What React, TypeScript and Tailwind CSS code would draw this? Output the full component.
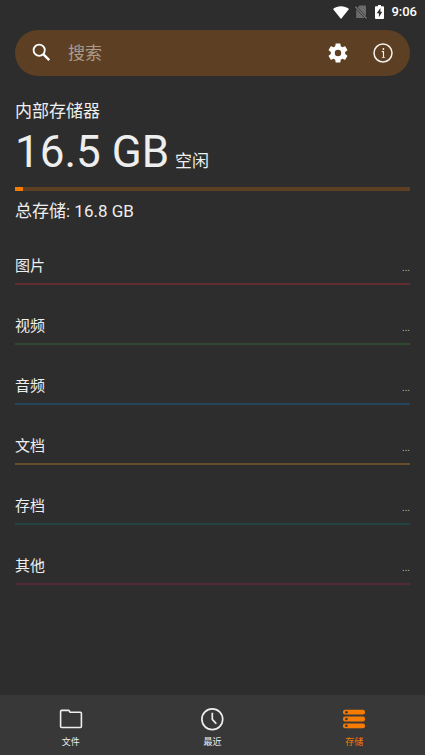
const categories = [
  { name: "图片", line: "border-[#602c2e]" },
  { name: "视频", line: "border-[#30482f]" },
  { name: "音频", line: "border-[#23465c]" },
  { name: "文档", line: "border-[#665029]" },
  { name: "存档", line: "border-[#22433f]" },
  { name: "其他", line: "border-[#532936]" },
];

function StatusBar() {
  return (
    <div className="flex h-6 items-center justify-end pr-2">
      <svg className="h-[13px] w-4" viewBox="0 0 16 13" fill="#fff" aria-hidden="true">
        <path d="M0 3C4.6-.8 11.4-.8 16 3L8 13z" />
      </svg>
      <svg className="ml-1.5 h-3.5 w-3" viewBox="0 0 12 14" aria-hidden="true">
        <path d="M4.5.5H10q1 0 1 1v11.6H1.2V3.8z" fill="#6b6b6b" />
        <path d="M0 1.2 11.7 13.6" stroke="#2d2d2d" strokeWidth="2.4" />
        <path d="M.3 1.6 11.5 13.4" stroke="#858585" strokeWidth="1.1" />
      </svg>
      <svg className="ml-2 h-3.5 w-[9px]" viewBox="0 0 9 14" aria-hidden="true">
        <path d="M3 0h3v1.3h2.2q.8 0 .8.8v11q0 .9-.8.9H.8q-.8 0-.8-.9v-11q0-.8.8-.8H3z" fill="#fff" />
        <path d="M5.4 3 1.8 8.3h2.1v3.9L7.2 6.8H5.4z" fill="#2d2d2d" />
      </svg>
      <span className="ml-[7px] text-[13px] leading-6 font-medium text-white">9:06</span>
    </div>
  );
}

function SearchBar() {
  return (
    <div className="mt-1.5 flex h-[46px] items-center rounded-full bg-[#5d4023] px-[17px]">
      <svg className="h-5 w-5 shrink-0" viewBox="0 0 20 20" fill="none" stroke="#fff" strokeWidth="1.8" aria-hidden="true">
        <circle cx="7.2" cy="7.2" r="5.6" />
        <path d="m11.2 11.2 6 6" strokeWidth="2.4" />
      </svg>
      <input
        type="text"
        aria-label="搜索"
        placeholder="搜索"
        className="ml-4 min-w-0 flex-1 bg-transparent pt-0.5 text-[17px] text-white outline-none placeholder:text-[#ab9b8b]"
      />
      <button type="button" aria-label="设置" className="shrink-0">
        <svg className="h-[22px] w-[22px]" viewBox="1 1 22 22" fill="#fff" aria-hidden="true">
          <path d="M19.14 12.94c.04-.3.06-.61.06-.94 0-.32-.02-.64-.07-.94l2.03-1.58a.49.49 0 0 0 .12-.61l-1.92-3.32a.488.488 0 0 0-.59-.22l-2.39.96c-.5-.38-1.03-.7-1.62-.94l-.36-2.54a.484.484 0 0 0-.48-.41h-3.84c-.24 0-.43.17-.47.41l-.36 2.54c-.59.24-1.13.57-1.62.94l-2.39-.96c-.22-.08-.47 0-.59.22L2.74 8.87c-.12.21-.08.47.12.61l2.03 1.58c-.05.3-.09.63-.09.94s.02.64.07.94l-2.03 1.58a.49.49 0 0 0-.12.61l1.92 3.32c.12.22.37.29.59.22l2.39-.96c.5.38 1.03.7 1.62.94l.36 2.54c.05.24.24.41.48.41h3.84c.24 0 .44-.17.47-.41l.36-2.54c.59-.24 1.13-.56 1.62-.94l2.39.96c.22.08.47 0 .59-.22l1.92-3.32c.12-.22.07-.47-.12-.61zM12 15.2a3.2 3.2 0 1 1 0-6.4 3.2 3.2 0 0 1 0 6.4" />
        </svg>
      </button>
      <button type="button" aria-label="信息" className="ml-6 shrink-0">
        <svg className="h-5 w-5" viewBox="0 0 20 20" fill="none" stroke="#f4f1ee" aria-hidden="true">
          <circle cx="10" cy="10" r="9" strokeWidth="1.5" />
          <path d="M8.8 8.6h1.7v6" strokeWidth="1.1" />
          <path d="M8.8 14.5h3.2" strokeWidth="0.7" />
          <circle cx="10.4" cy="6" r="0.9" fill="#f4f1ee" stroke="none" />
        </svg>
      </button>
    </div>
  );
}

function FolderIcon() {
  return (
    <svg className="h-6 w-6" viewBox="0 0 24 24" fill="none" stroke="#eee" strokeWidth="1.6" strokeLinejoin="round" aria-hidden="true">
      <path d="M1.6 4.4q0-1 1-1h6.8q.7 0 1 .6l.7 1.3h10.3q1 0 1 1v13.2q0 1-1 1H2.6q-1 0-1-1z" />
    </svg>
  );
}

function ClockIcon() {
  return (
    <svg className="h-6 w-6" viewBox="0 0 24 24" fill="none" stroke="#eee" strokeWidth="1.7" aria-hidden="true">
      <circle cx="12.3" cy="12.2" r="10.4" />
      <path d="M12.3 5.8v6.6l4 4.4" />
    </svg>
  );
}

function StorageIcon() {
  return (
    <svg className="h-6 w-6" viewBox="0 0 24 24" aria-hidden="true">
      {[2.8, 9.6, 16.4].map((y) => (
        <g key={y}>
          <rect x="1" y={y} width="22" height="4.8" rx="2" fill="#f57c00" />
          <circle cx="4.4" cy={y + 2.4} r="1.3" fill="#383838" />
        </g>
      ))}
    </svg>
  );
}

const tabs = [
  { name: "文件", icon: <FolderIcon />, color: "text-[#eeeeee]" },
  { name: "最近", icon: <ClockIcon />, color: "text-[#eeeeee]" },
  { name: "存储", icon: <StorageIcon />, color: "text-[#f57c00]" },
];

export default function App() {
  return (
    <div className="flex min-h-screen flex-col bg-[#2d2d2d] font-[Roboto,'Noto_Sans_CJK_SC',sans-serif] text-[#eeeeee]">
      <StatusBar />

      <main className="flex-1 px-[15px]">
        <SearchBar />

        <section className="mt-[25px]">
          <h1 className="text-[17px] leading-5">内部存储器</h1>
          <p className="mt-[5px] flex items-baseline gap-1.5">
            <span className="text-[44px] leading-[52px]">16.5 GB</span>
            <span className="text-[17px] leading-5">空闲</span>
          </p>
          <div className="mt-[9px] h-1 bg-[#5d4023]">
            <div className="h-full w-[2%] bg-[#f57c00]" />
          </div>
          <p className="mt-2.5 text-[17px] leading-5">总存储: 16.8 GB</p>
        </section>

        <ul className="mt-1">
          {categories.map((c) => (
            <li key={c.name} className={`flex h-[60px] items-end justify-between border-b-2 pb-[7px] ${c.line}`}>
              <span className="text-[15px] leading-5">{c.name}</span>
              <span className="text-[10px] leading-4 text-[#bdbdbd]">...</span>
            </li>
          ))}
        </ul>
      </main>

      <nav className="grid h-[60px] grid-cols-3 bg-[#383838]">
        {tabs.map((t) => (
          <button key={t.name} type="button" className={`flex flex-col items-center pt-3 ${t.color}`}>
            {t.icon}
            <span className="mt-[5px] text-[9px] leading-3">{t.name}</span>
          </button>
        ))}
      </nav>
    </div>
  );
}
